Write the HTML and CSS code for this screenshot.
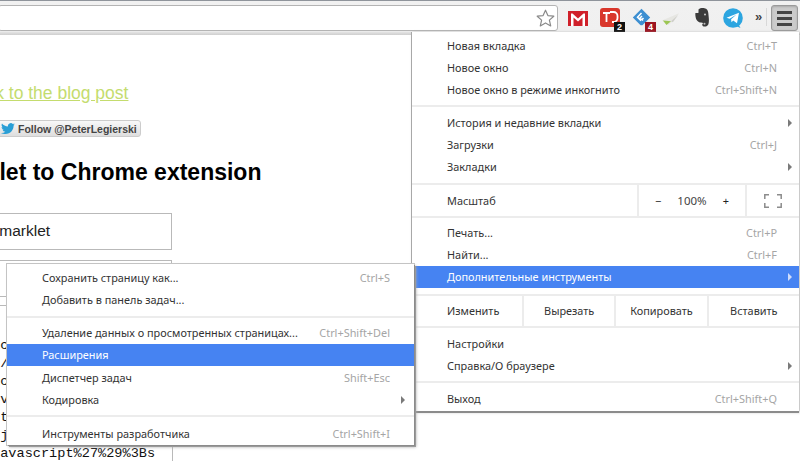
FILE: index.html
```html
<!DOCTYPE html>
<html lang="ru">
<head>
<meta charset="utf-8">
<title>Bookmarklet to Chrome extension</title>
<link rel="stylesheet" href="styles.css">
</head>
<body>
<header class="toolbar">
  <div class="omnibox">
    <svg class="star" width="19" height="18" viewBox="0 0 19 18"><path d="M9.5 1.2l2.4 5.4 5.9.6-4.4 3.9 1.3 5.8-5.2-3-5.2 3 1.3-5.8L1.2 7.2l5.9-.6z" fill="#fff" stroke="#8a8a8a" stroke-width="1.2" stroke-linejoin="round"/></svg>
  </div>
  <div class="extensions">
    <span class="ext ext-gmail"><svg width="20" height="15" viewBox="0 0 20 15"><rect width="20" height="15" fill="#d0202a"/><path d="M3 15V2.5h1.5L10 7.5l5.500-5H17V15h-2.500V6.500L10 10.500 5.500 6.500V15z" fill="#fff"/></svg></span>
    <span class="ext ext-td"><svg width="20" height="19" viewBox="0 0 20 19"><rect width="20" height="19" rx="3" fill="#d9372c"/><path d="M3 5h7M6.500 5v9M10 4h3.500a4 4 0 0 1 4 4v2a4 4 0 0 1-4 4H12" fill="none" stroke="#fff" stroke-width="1.800"/></svg><span class="badge badge-black">2</span></span>
    <span class="ext ext-feedly"><svg width="19" height="19" viewBox="0 0 19 19"><path d="M9.500.8l8.700 8.700-7 7a2.400 2.400 0 0 1-3.400 0l-7-7z" fill="#3d8fd1"/><path d="M9.500 5L5.500 9.200l3.500 3.500M10 8l-2 2 1.500 1.500M11.500 10l-1.500 1.500 1 1" fill="none" stroke="#fff" stroke-width="1.500"/></svg><span class="badge badge-red">4</span></span>
    <span class="ext ext-plane"><svg width="18" height="13" viewBox="0 0 20 14"><path d="M0 8L19 0l-6 8-6 5z" fill="#e6e6e2"/><path d="M1 8l9 1-5 4z" fill="#9cc653"/><path d="M10 9l8-7-6 8z" fill="#cfcfca"/></svg></span>
    <span class="ext ext-evernote"><svg width="14" height="19" viewBox="0 0 14 19"><path d="M3.500 1.500C5 .2 7.500-.2 9.500.3c2.500.5 3.500 2 3.800 4.700.4 4 .9 7 .4 10-.4 3-3 4-5 3.500-2-.5-1.800-2.800-.2-3.200-.8-.6-1.500-.8-2.500-.8C3 14.500 1 12 .5 8.500.3 7 .3 6 .4 5h2.600c.5 0 .5-.5.5-1z" fill="#3b3b3b"/><circle cx="10" cy="6.500" r="1" fill="#ccc"/><circle cx="9.500" cy="15.800" r="1" fill="#bbb"/></svg></span>
    <span class="ext ext-telegram"><svg width="20" height="21" viewBox="0 0 20 21"><circle cx="10" cy="10" r="9.800" fill="#2ca5e0"/><path d="M15.500 16.500l2 3.500-4.500-2z" fill="#2ca5e0"/><path d="M3.500 9.800l12.500-5-2 10.500-3.800-2.800-1.700 1.800-.4-3 5.400-4.700-6.900 4.100z" fill="#fff"/></svg></span>
    <span class="more">»</span>
  </div>
  <div class="menu-button"><span></span><span></span><span></span></div>
</header>

<main class="page">
  <a class="back-link" href="#">Back to the blog post</a>
  <div class="follow"><svg width="14" height="11" viewBox="0 0 14 11"><path d="M14 1.400c-.5.200-1 .400-1.600.400.600-.300 1-.900 1.200-1.500-.5.300-1.100.500-1.800.700A2.900 2.900 0 0 0 6.900 3.500C4.500 3.400 2.400 2.200 1 .5c-.8 1.300-.4 3 .9 3.800-.5 0-.9-.1-1.300-.3 0 1.400 1 2.600 2.300 2.800-.4.100-.9.100-1.300 0 .4 1.200 1.400 2 2.700 2A5.700 5.700 0 0 1 0 10c1.300.8 2.800 1 4.400 1 5.300 0 8.300-4.500 8.200-8.500.6-.3 1-.7 1.400-1.100z" fill="#2a9fd6"/></svg><span>Follow @PeterLegierski</span></div>
  <h1 class="title">Bookmarklet to Chrome extension</h1>
  <div class="field field-name">Bookmarklet</div>
  <div class="field field-url"><span class="colon">:</span></div>
  <pre class="code"><span class="line">Lc</span>
<span class="line">r/</span>
<span class="line">lc</span>
<span class="line">Sv</span>
<span class="line">nt</span>
<span class="line">-j</span>
<span class="line">javascript%27%29%3Bs</span></pre>
</main>

<nav class="menu menu-main">
  <div class="item"><span>Новая вкладка</span><span class="key">Ctrl+T</span></div>
  <div class="item"><span>Новое окно</span><span class="key">Ctrl+N</span></div>
  <div class="item"><span>Новое окно в режиме инкогнито</span><span class="key">Ctrl+Shift+N</span></div>
  <div class="sep sep-a"></div>
  <div class="item arrow"><span>История и недавние вкладки</span></div>
  <div class="item"><span>Загрузки</span><span class="key">Ctrl+J</span></div>
  <div class="item arrow"><span>Закладки</span></div>
  <div class="zoom-row">
    <span class="zoom-label">Масштаб</span>
    <div class="zoom-controls"><span class="zoom-btn">−</span><span class="zoom-val">100%</span><span class="zoom-btn">+</span></div>
    <div class="zoom-full"><svg width="18" height="14" viewBox="0 0 18 14"><path d="M.8 5V.8H5M13 .8h4.200V5M17.200 9v4.200H13M5 13.200H.8V9" fill="none" stroke="#8c8c8c" stroke-width="1.500"/></svg></div>
  </div>
  <div class="item"><span>Печать...</span><span class="key">Ctrl+P</span></div>
  <div class="item"><span>Найти...</span><span class="key">Ctrl+F</span></div>
  <div class="item arrow active"><span>Дополнительные инструменты</span></div>
  <div class="edit-row">
    <span class="edit-label">Изменить</span>
    <span class="edit-btn">Вырезать</span>
    <span class="edit-btn">Копировать</span>
    <span class="edit-btn">Вставить</span>
  </div>
  <div class="item"><span>Настройки</span></div>
  <div class="item arrow"><span>Справка/О браузере</span></div>
  <div class="sep sep-a"></div>
  <div class="item"><span>Выход</span><span class="key">Ctrl+Shift+Q</span></div>
</nav>

<nav class="menu menu-sub">
  <div class="item"><span>Сохранить страницу как...</span><span class="key">Ctrl+S</span></div>
  <div class="item"><span>Добавить в панель задач...</span></div>
  <div class="sep sep-b"></div>
  <div class="item"><span>Удаление данных о просмотренных страницах...</span><span class="key">Ctrl+Shift+Del</span></div>
  <div class="item active"><span>Расширения</span></div>
  <div class="item"><span>Диспетчер задач</span><span class="key">Shift+Esc</span></div>
  <div class="item arrow"><span>Кодировка</span></div>
  <div class="sep sep-c"></div>
  <div class="item"><span>Инструменты разработчика</span><span class="key">Ctrl+Shift+I</span></div>
</nav>
</body>
</html>
```

FILE: styles.css
```css
* { box-sizing: border-box; }
html, body { height: 100%; }
body {
  margin: 0;
  width: 800px;
  height: 461px;
  overflow: hidden;
  background: #fff;
  position: relative;
  font-family: "Liberation Sans", Arial, sans-serif;
}

/* toolbar */
.toolbar {
  height: 35px;
  display: flex;
  align-items: flex-start;
  background: linear-gradient(#f1f1f1 0, #f0f0f0 30px, #dcdcdc 32px, #c9c9c9 35px);
  border-top: 1px solid #8f949b;
  padding-top: 4px;
}
.omnibox {
  width: 560px;
  height: 26px;
  margin-left: -2px;
  background: #fff;
  border: 1px solid #b4b4b4;
  border-radius: 3px;
  display: flex;
  justify-content: flex-end;
  align-items: center;
  padding-right: 2px;
}
.extensions {
  width: 213px;
  height: 26px;
  position: relative;
  display: flex;
  align-items: center;
  padding-left: 10px;
}
.ext { position: relative; display: flex; align-items: center; height: 26px; }
.ext-gmail { margin-right: 12px; }
.ext-td { margin-right: 12px; margin-top: -1px; }
.ext-feedly { margin-right: 11px; margin-top: -1px; }
.ext-plane { margin-right: 15px; margin-top: 2px; }
.ext-evernote { margin-right: 14px; margin-top: -1px; }
.ext-telegram { margin-right: 12px; margin-top: 1px; }
.more { font-size: 13px; font-weight: bold; color: #444; margin-top: -2px; padding-right: 4px; border-right: 1px solid #d8d8d8; line-height: 18px; }
.badge {
  position: absolute;
  right: -5px;
  bottom: -1px;
  width: 11px;
  height: 10px;
  font-size: 9px;
  line-height: 10px;
  font-weight: bold;
  text-align: center;
  color: #fff;
}
.badge-black { background: #111; }
.badge-red { background: #9c1420; }
.menu-button {
  width: 27px;
  height: 26px;
  background: #cbcbcb;
  border: 1px solid #9a9a9a;
  border-radius: 3px;
  display: flex;
  flex-direction: column;
  justify-content: center;
  align-items: center;
  gap: 3px;
  box-shadow: inset 0 1px 2px #aaa;
}
.menu-button span { display: block; width: 15px; height: 3px; background: #444; }

/* page */
.page { display: flex; flex-direction: column; align-items: flex-start; padding-top: 48px; }
.back-link { font-size: 17.500px; line-height: 21px; color: #c4dc6e; margin-left: -35px; text-decoration: underline; white-space: nowrap; }
.follow {
  margin: 16px 0 0 -20px;
  width: 161px;
  height: 17px;
  display: flex;
  align-items: center;
  gap: 3px;
  padding-left: 20px;
  font-size: 10.500px;
  font-weight: bold;
  color: #444;
  background: linear-gradient(#f8f8f8, #dedede);
  border: 1px solid #ccc;
  border-radius: 3px;
  white-space: nowrap;
}
.title { font-size: 23px; line-height: 28px; font-weight: bold; color: #000; margin: 21px 0 0 -113px; white-space: nowrap; }
.field {
  width: 180px;
  margin-left: -8px;
  height: 37px;
  border: 1px solid #b9b9b9;
  font-size: 15.500px;
  line-height: 34px;
  color: #222;
  white-space: nowrap;
  overflow: hidden;
}
.field-name { margin-top: 27px; text-indent: -29px; }
.field-url { margin-top: 10px; }
.colon { color: #2a7fd0; }
.code {
  width: 181px;
  height: 157px;
  margin: 8px 0 0 -8px;
  padding: 31px 0 0;
  border-top: 1px solid #b9b9b9;
  border-right: 1px solid #b9b9b9;
  font-family: "Liberation Mono", monospace;
  font-size: 13.600px;
  line-height: 18px;
  color: #111;
  overflow: hidden;
}

/* menus */
.menu {
  position: absolute;
  background: #fff;
  font-family: "Noto Sans", sans-serif;
  font-size: 10.900px;
  color: #333;
  padding-top: 3px;
}
.menu-main {
  left: 412px;
  top: 32px;
  width: 387px;
  height: 379px;
  box-shadow: 0 2px 0 #8b8b8b, -1px 0 0 #a8a8a8, 1px 1px 3px #aaa;
}
.menu-sub {
  left: 7px;
  top: 264px;
  width: 407px;
  height: 181px;
  box-shadow: 1px 1px 0 #8b8b8b, 2px 2px 0 #9a9a9a, 0 0 0 1px #c4c4c4, 2px 2px 3px #aaa;
}
.item {
  height: 22px;
  padding: 0 22px 1px 35px;
  display: flex;
  justify-content: space-between;
  align-items: center;
  white-space: nowrap;
  position: relative;
}
.key { color: #a5a5a5; }
.menu-sub .item { padding-right: 24px; }
.menu-sub .active { margin-bottom: 1px; }
.active { background: #4683f2; color: #fff; }
.arrow::after {
  content: "";
  position: absolute;
  right: 7px;
  top: 7px;
  border-left: 4px solid #7a7a7a;
  border-top: 4px solid transparent;
  border-bottom: 4px solid transparent;
}
.menu-sub .arrow::after { right: 9px; }
.active.arrow::after { border-left-color: #cfdcfb; }
.sep { height: 2px; background: #ececec; }
.sep-a { margin: 4px 0 5px; }
.sep-b { margin: 5px 0 4px; }
.sep-c { margin: 4px 0 6px; }

.zoom-row, .edit-row {
  display: flex;
  align-items: stretch;
  border-top: 2px solid #ececec;
  border-bottom: 2px solid #ececec;
}
.zoom-row { height: 35px; margin: 5px 0 4px; }
.zoom-label { width: 225px; padding-left: 35px; align-self: center; padding-bottom: 1px; }
.zoom-controls {
  width: 110px;
  border-left: 2px solid #ececec;
  border-right: 2px solid #ececec;
  display: flex;
  align-items: center;
  justify-content: space-between;
  padding: 0 16px;
}
.zoom-btn { color: #222; }
.zoom-val { font-size: 11.500px; color: #444; }
.zoom-full { flex: 1; display: flex; align-items: center; justify-content: center; }

.edit-row { height: 34px; margin: 6px 0 5px; }
.edit-label { width: 110px; padding-left: 35px; align-self: center; padding-bottom: 1px; }
.edit-btn {
  flex: 1;
  border-left: 2px solid #ececec;
  display: flex;
  align-items: center;
  justify-content: center;
  padding-bottom: 1px;
}
```
